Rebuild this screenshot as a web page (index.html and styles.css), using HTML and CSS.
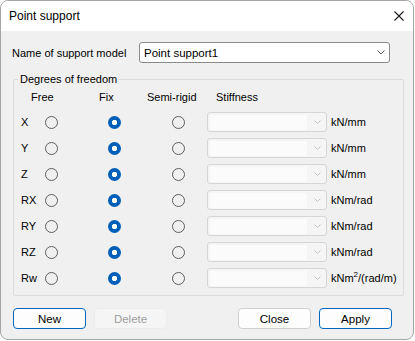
FILE: index.html
```html
<!DOCTYPE html>
<html>
<head>
  <title>Point support</title>
  <link rel="stylesheet" href="styles.css">
</head>
<body>
  <div class="window">
    <div class="titlebar">
      <span class="title">Point support</span>
      <svg class="close" width="10" height="10" viewBox="0 0 10 10">
        <path d="M0.5 0.5L9.5 9.5M9.5 0.5L0.5 9.5" stroke="#1b1b1b" stroke-width="1.1" fill="none"/>
      </svg>
    </div>

    <div class="content">
      <div class="name-row">
        <span class="name-label">Name of support model</span>
        <div class="combo">
          <span class="combo-text">Point support1</span>
          <svg class="chevron" width="8" height="5" viewBox="0 0 8 5">
            <path d="M0.5 0.5L4 4L7.5 0.5" stroke="#555" stroke-width="1" fill="none"/>
          </svg>
        </div>
      </div>

      <fieldset class="group">
        <legend>Degrees of freedom</legend>
        <div class="dof-head">
          <span class="h-free">Free</span>
          <span class="h-fix">Fix</span>
          <span class="h-semi">Semi-rigid</span>
          <span class="h-stiff">Stiffness</span>
        </div>

        <div class="dof-grid">
          <span class="axis">X</span>
          <span class="radio"></span><span class="radio on"></span><span class="radio"></span>
          <div class="stiff"><span class="field"></span><svg class="chevron" width="7" height="4" viewBox="0 0 7 4"><path d="M0.5 0.5L3.5 3.5L6.5 0.5" stroke="#c2c2c2" fill="none"/></svg></div>
          <span class="unit">kN/mm</span>

          <span class="axis">Y</span>
          <span class="radio"></span><span class="radio on"></span><span class="radio"></span>
          <div class="stiff"><span class="field"></span><svg class="chevron" width="7" height="4" viewBox="0 0 7 4"><path d="M0.5 0.5L3.5 3.5L6.5 0.5" stroke="#c2c2c2" fill="none"/></svg></div>
          <span class="unit">kN/mm</span>

          <span class="axis">Z</span>
          <span class="radio"></span><span class="radio on"></span><span class="radio"></span>
          <div class="stiff"><span class="field"></span><svg class="chevron" width="7" height="4" viewBox="0 0 7 4"><path d="M0.5 0.5L3.5 3.5L6.5 0.5" stroke="#c2c2c2" fill="none"/></svg></div>
          <span class="unit">kN/mm</span>

          <span class="axis">RX</span>
          <span class="radio"></span><span class="radio on"></span><span class="radio"></span>
          <div class="stiff"><span class="field"></span><svg class="chevron" width="7" height="4" viewBox="0 0 7 4"><path d="M0.5 0.5L3.5 3.5L6.5 0.5" stroke="#c2c2c2" fill="none"/></svg></div>
          <span class="unit">kNm/rad</span>

          <span class="axis">RY</span>
          <span class="radio"></span><span class="radio on"></span><span class="radio"></span>
          <div class="stiff"><span class="field"></span><svg class="chevron" width="7" height="4" viewBox="0 0 7 4"><path d="M0.5 0.5L3.5 3.5L6.5 0.5" stroke="#c2c2c2" fill="none"/></svg></div>
          <span class="unit">kNm/rad</span>

          <span class="axis">RZ</span>
          <span class="radio"></span><span class="radio on"></span><span class="radio"></span>
          <div class="stiff"><span class="field"></span><svg class="chevron" width="7" height="4" viewBox="0 0 7 4"><path d="M0.5 0.5L3.5 3.5L6.5 0.5" stroke="#c2c2c2" fill="none"/></svg></div>
          <span class="unit">kNm/rad</span>

          <span class="axis">Rw</span>
          <span class="radio"></span><span class="radio on"></span><span class="radio"></span>
          <div class="stiff"><span class="field"></span><svg class="chevron" width="7" height="4" viewBox="0 0 7 4"><path d="M0.5 0.5L3.5 3.5L6.5 0.5" stroke="#c2c2c2" fill="none"/></svg></div>
          <span class="unit">kNm<sup>2</sup>/(rad/m)</span>
        </div>
      </fieldset>

      <div class="buttons">
        <div class="btn-group">
          <button class="btn default">New</button>
          <button class="btn" disabled>Delete</button>
        </div>
        <div class="btn-group">
          <button class="btn">Close</button>
          <button class="btn default">Apply</button>
        </div>
      </div>
    </div>
  </div>
</body>
</html>
```

FILE: styles.css
```css
/* Global styles */
body {
  margin: 0;
  padding: 0;
  background-color: #fff;
  font-family: "Liberation Sans", Arial, sans-serif;
  font-size: 11px;
  color: #000;
}

/* Dialog window */
.window {
  width: 414px;
  height: 340px;
  box-sizing: border-box;
  border: 1px solid #a6a6a6;
  border-radius: 8px;
  overflow: hidden;
  background-color: #f0f0f0;
  display: flex;
  flex-direction: column;
}

.titlebar {
  height: 30px;
  flex: none;
  background-color: #fff;
  display: flex;
  align-items: center;
  justify-content: space-between;
  padding: 0 9px 0 8px;
}

.title {
  font-size: 12px;
}

.close {
  display: block;
}

.content {
  flex: 1;
  padding-top: 11px;
}

/* Name of support model */
.name-row {
  display: flex;
  align-items: center;
  padding-left: 11px;
}

.name-label {
  width: 127px;
}

.combo {
  width: 251px;
  height: 21px;
  box-sizing: border-box;
  border: 1px solid #8a8a8a;
  border-radius: 3px;
  background-color: #fff;
  display: flex;
  align-items: center;
  justify-content: space-between;
  padding: 0 4px 0 4px;
}

.combo-text {
  font-size: 11.5px;
}

/* Group box */
.group {
  margin: 8px 0 0 12px;
  padding: 0 0 4px 0;
  width: 391px;
  box-sizing: border-box;
  border: 1px solid #dcdcdc;
  border-radius: 2px;
}

.group legend {
  margin-left: 4px;
  padding: 0 2px;
  line-height: 16px;
}

.dof-head {
  display: flex;
  align-items: center;
  height: 20px;
  margin-bottom: 2px;
}

.h-free {
  margin-left: 17px;
  width: 68px;
}

.h-fix {
  width: 48px;
}

.h-semi {
  width: 69px;
}

.dof-grid {
  display: grid;
  grid-template-columns: 31px 63px 64px 35px 120px auto;
  grid-auto-rows: 26px;
  align-items: center;
}

.axis {
  padding-left: 7px;
}

.radio {
  width: 13px;
  height: 13px;
  box-sizing: border-box;
  border: 1px solid #5f5f5f;
  border-radius: 50%;
}

.radio.on {
  border: none;
  background: radial-gradient(circle, #fff 0 2.4px, #005fb8 3px);
}

.stiff {
  height: 20px;
  box-sizing: border-box;
  border: 1px solid #d6d6d6;
  border-radius: 3px;
  background-color: #f5f5f5;
  padding: 2px;
  display: flex;
  align-items: center;
}

.stiff .field {
  width: 97px;
  height: 15px;
  background-color: #fbfbfb;
}

.stiff .chevron {
  margin-left: 7px;
}

.unit {
  padding-left: 4px;
  white-space: nowrap;
}

.unit sup {
  font-size: 8px;
  line-height: 0;
  vertical-align: 5px;
}

/* Buttons */
.buttons {
  display: flex;
  justify-content: space-between;
  margin-top: 12px;
  padding: 0 21px 0 12px;
}

.btn-group {
  display: flex;
  gap: 8px;
}

.btn {
  width: 73px;
  height: 21px;
  box-sizing: border-box;
  border: 1px solid #d0d0d0;
  border-radius: 4px;
  background-color: #fdfdfd;
  font-family: inherit;
  font-size: 11.5px;
  color: #000;
  padding: 0;
}

.btn.default {
  border-color: #0067c0;
}

.btn:disabled {
  background-color: #f5f5f5;
  border-color: #ececec;
  color: #a0a0a0;
}
```
